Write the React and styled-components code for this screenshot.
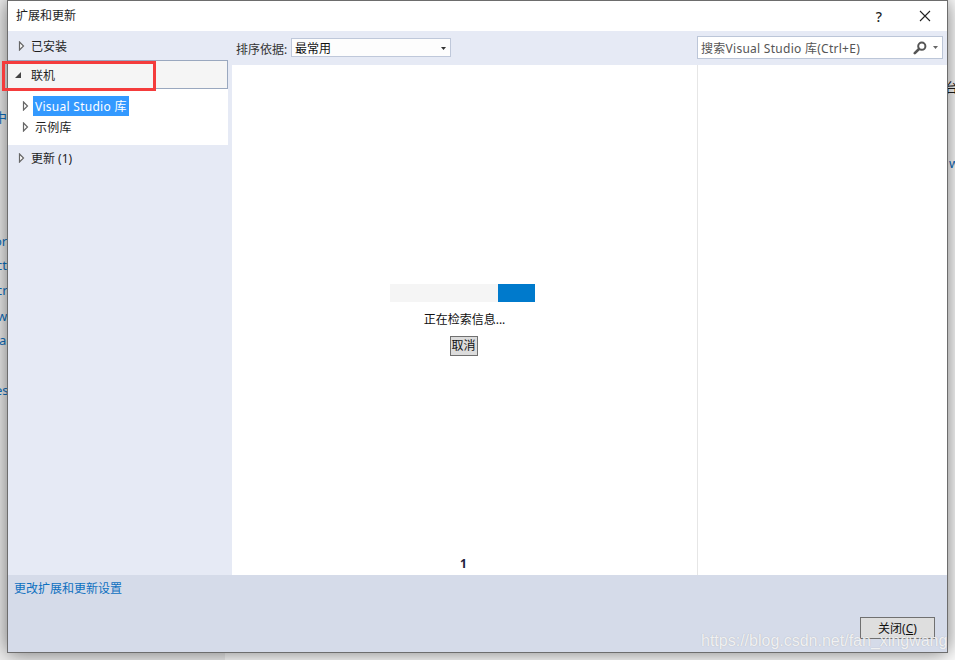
import React from "react";
import styled, { createGlobalStyle } from "styled-components";

const Global = createGlobalStyle`
  html, body { margin: 0; padding: 0; background: #fff; }
  * { box-sizing: border-box; }
`;
const FONT = `"Noto Sans", "Noto Sans CJK SC", sans-serif`;

const Desktop = styled.div`
  position: relative; width: 955px; height: 660px; overflow: hidden;
  background: linear-gradient(to right, #f0f0f0 225px, #fff 225px);
  font-family: ${FONT}; font-size: 12px; color: #1e1e1e;
`;
const BackdropText = styled.span`
  position: absolute; font-size: 13px; line-height: 16px; color: ${p => p.$dark ? "#1e1e1e" : "#0e70c0"};
  left: ${p => p.$x}px; top: ${p => p.$y}px;
`;
const Window = styled.div`
  position: absolute; left: 7px; top: 0; width: 941px; height: 653px;
  display: flex; flex-direction: column; background: #fff;
  border: 1px solid #6d6d6d; box-shadow: 0 0 20px rgba(0,0,0,.55);
`;
const TitleBar = styled.div`
  height: 30px; flex: none; display: flex; align-items: center; padding: 0 16px 0 8px; background: #fff;
`;
const Title = styled.span` flex: 1; line-height: 30px; `;
const Help = styled.span` width: 10px; margin-right: 35px; font-size: 14px; font-weight: 500; text-align: center; `;
const Main = styled.div` flex: 1; min-height: 0; display: flex; `;
const Sidebar = styled.div` width: 224px; flex: none; background: #e6eaf5; `;
const NavRow = styled.div`
  height: ${p => p.$h || 29}px; width: 220px; display: flex; align-items: center; gap: 6px; padding-left: ${p => p.$pl ?? 10}px;
  ${p => p.$active && "background:#f5f5f5;border:1px solid #9aa8bf;border-left:none;"}
`;
const TreePanel = styled.div` width: 220px; height: 56px; background: #fff; padding: 7px 0 0 14px; `;
const TreeRow = styled.div` height: ${p => p.$h}px; display: flex; align-items: center; gap: 4px; `;
const TreeLabel = styled.span`
  display: flex; align-items: center; height: 20px; padding: 0 2px; letter-spacing: .27px;
  ${p => p.$sel && "background:#3399ff;color:#fff;"}
`;
const Content = styled.div` flex: 1; min-width: 0; display: flex; flex-direction: column; background: #e6eaf5; `;
const Toolbar = styled.div` height: 34px; flex: none; display: flex; align-items: center; padding: 0 4px 0 4px; `;
const SortLabel = styled.span` width: 55px; color: #333; padding-top: 1px; `;
const Select = styled.div`
  width: 160px; height: 19px; margin-top: -2px; display: flex; align-items: center; justify-content: space-between;
  padding: 2px 4px 0 3px; background: #fdfdfd; border: 1px solid #bfc8da; color: #111;
`;
const Spacer = styled.div` flex: 1; `;
const Search = styled.div`
  width: 246px; height: 23px; margin-top: -2px; display: flex; align-items: center; padding: 1px 4px 0 3px;
  background: #fff; border: 1px solid #bcc6d8; color: #555;
`;
const SearchText = styled.span` flex: 1; letter-spacing: .27px; `;
const Panes = styled.div` flex: 1; min-height: 0; display: flex; background: #fff; `;
const ListPane = styled.div`
  width: 466px; flex: none; display: flex; flex-direction: column; padding-top: 23px; border-right: 1px solid #e6e6e6;
`;
const Loader = styled.div` flex: 1; display: flex; flex-direction: column; align-items: center; justify-content: center; `;
const Track = styled.div` width: 145px; height: 18px; margin-left: -4px; background: #f5f5f5; display: flex; justify-content: flex-end; `;
const Fill = styled.div` width: 37px; background: #007acc; `;
const Status = styled.div` margin-top: 9px; line-height: 18px; color: #111; `;
const CancelButton = styled.button`
  margin: 7px 2px 0 0; width: 28px; height: 20px; padding: 0; background: #dcdcdc; border: 1px solid #707070;
  font: inherit; color: #111; line-height: 16px; outline: 0.5px solid #707070; outline-offset: -1px;
`;
const Pager = styled.div` height: 24px; flex: none; padding: 1px 2px 0 0; text-align: center; font-weight: 700; line-height: 24px; color: #1e1e3c; `;
const DetailPane = styled.div` flex: 1; `;
const Footer = styled.div`
  height: 77px; flex: none; display: flex; justify-content: space-between; background: #d5dbe9; padding: 5px 12px 0 6px;
`;
const SettingsLink = styled.a` color: #0e70c0; line-height: 17px; height: 17px; `;
const CloseButton = styled.button`
  align-self: flex-end; width: 75px; height: 22px; margin-bottom: 13px; padding: 0; background: #dedede; border: 1px solid #707070;
  font: inherit; color: #111;
`;
const Callout = styled.div`
  position: absolute; left: 2px; top: 61px; width: 154px; height: 30px; border: 3px solid #f43c3c;
`;
const Watermark = styled.div`
  position: absolute; left: 701px; top: 631px; font: 16px/20px "Liberation Sans", sans-serif;
  color: rgba(255,255,255,.82); text-shadow: 0 0 1px rgba(130,130,130,.5); white-space: nowrap;
`;

const Closed = () => (
  <svg width="7" height="10" viewBox="0 0 7 10" style={{flex:"none"}}><path d="M1.5 1 L5.5 5 L1.5 9 Z" fill="#fff" stroke="#666" strokeWidth="1.2"/></svg>
);
const Open = () => (
  <svg width="8" height="8" viewBox="0 0 8 8" style={{flex:"none", marginLeft:-1, marginRight:3}}><path d="M7 1 V7 H1 Z" fill="#444"/></svg>
);
const Caret = ({ $muted }) => (
  <svg width="5" height="3" viewBox="0 0 5 3"><path d="M0 0 H5 L2.5 3 Z" fill={$muted ? "#666" : "#333"}/></svg>
);
const Magnifier = () => (
  <svg width="14" height="14" viewBox="0 0 14 14" style={{marginRight:6}}>
    <circle cx="8.8" cy="5.2" r="3.6" fill="none" stroke="#555" strokeWidth="2"/>
    <path d="M6 8 L1.8 12.2" stroke="#555" strokeWidth="2.6" strokeLinecap="round"/>
  </svg>
);
const CloseIcon = () => (
  <svg width="12" height="12" viewBox="0 0 12 12"><path d="M1 1 L11 11 M11 1 L1 11" stroke="#222" strokeWidth="1.1"/></svg>
);

export default function App() {
  return (
    <Desktop>
      <Global />
      <BackdropText $x={-6} $y={109}>中</BackdropText>
      <BackdropText $x={-6} $y={233}>or</BackdropText>
      <BackdropText $x={-4} $y={257}>ct</BackdropText>
      <BackdropText $x={-4} $y={282}>cr</BackdropText>
      <BackdropText $x={-3} $y={308}>w</BackdropText>
      <BackdropText $x={-1} $y={332}>a</BackdropText>
      <BackdropText $x={-5} $y={382}>es</BackdropText>
      <BackdropText $x={945} $y={79} $dark>台</BackdropText>
      <BackdropText $x={949} $y={155}>w</BackdropText>
      <Window>
        <TitleBar>
          <Title>扩展和更新</Title>
          <Help>?</Help>
          <CloseIcon />
        </TitleBar>
        <Main>
          <Sidebar>
            <NavRow><Closed />已安装</NavRow>
            <NavRow $active $pl={7}><Open />联机</NavRow>
            <TreePanel>
              <TreeRow $h={20}><Closed /><TreeLabel $sel>Visual Studio 库</TreeLabel></TreeRow>
              <TreeRow $h={22}><Closed /><TreeLabel>示例库</TreeLabel></TreeRow>
            </TreePanel>
            <NavRow $h={25}><Closed />更新 (1)</NavRow>
          </Sidebar>
          <Content>
            <Toolbar>
              <SortLabel>排序依据:</SortLabel>
              <Select>最常用<Caret /></Select>
              <Spacer />
              <Search>
                <SearchText>搜索Visual Studio 库(Ctrl+E)</SearchText>
                <Magnifier />
                <Caret $muted />
              </Search>
            </Toolbar>
            <Panes>
              <ListPane>
                <Loader>
                  <Track><Fill /></Track>
                  <Status>正在检索信息...</Status>
                  <CancelButton>取消</CancelButton>
                </Loader>
                <Pager>1</Pager>
              </ListPane>
              <DetailPane />
            </Panes>
          </Content>
        </Main>
        <Footer>
          <SettingsLink>更改扩展和更新设置</SettingsLink>
          <CloseButton>关闭(<u>C</u>)</CloseButton>
        </Footer>
      </Window>
      <Callout />
      <Watermark>https://blog.csdn.net/fan_xingwang</Watermark>
    </Desktop>
  );
}
